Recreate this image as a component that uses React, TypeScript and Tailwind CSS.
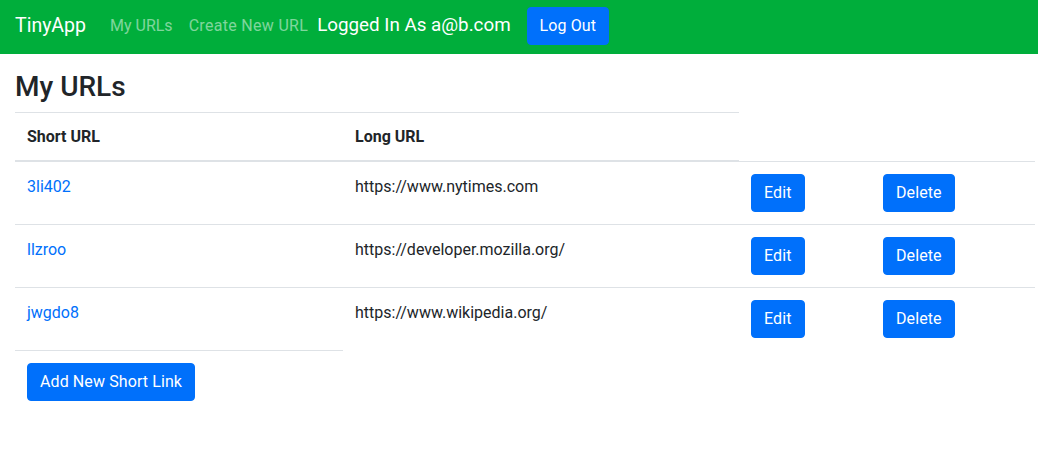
import React from "react";

const rows = [
  { short: "3li402", long: "https://www.nytimes.com" },
  { short: "llzroo", long: "https://developer.mozilla.org/" },
  { short: "jwgdo8", long: "https://www.wikipedia.org/" },
];

const font = { fontFamily: "Roboto, 'Noto Sans', sans-serif" };

function Button({ children }: { children: React.ReactNode }) {
  return (
    <button className="bg-[#0070fb] text-white text-base leading-6 px-3 py-1.5 rounded-[4px] border border-[#0070fb] tracking-[0.1px]">
      {children}
    </button>
  );
}

export default function App() {
  return (
    <div className="min-h-[464px] bg-white text-[#212529]" style={font}>
      <nav className="h-[54px] bg-[#00ae3b] flex items-center px-[15px] pb-[3px]">
        <span className="text-white text-[19.5px] leading-[30px] mr-4">TinyApp</span>
        <a className="text-white/50 text-base px-2">My URLs</a>
        <a className="text-white/50 text-base px-2 tracking-[0.3px]">Create New URL</a>
        <span className="text-white text-[18.8px] ml-px mr-4">Logged In As a@b.com</span>
        <Button>Log Out</Button>
      </nav>

      <div className="px-[15px]">
        <h3 className="text-[28px] leading-[34px] font-medium mt-4 mb-2">My URLs</h3>

        <div className="w-[1020px] text-base leading-6">
          <div className="flex w-[724px] border-t border-b-2 border-[#dee2e6] font-bold">
            <div className="w-[328px] px-3 pt-3 pb-[11px]">Short URL</div>
            <div className="w-[396px] px-3 pt-3 pb-[11px]">Long URL</div>
          </div>
          {rows.map((r, i) => (
            <div key={r.short} className={i === 0 ? "flex border-t border-[#dee2e6] -mt-px" : "flex border-t border-[#dee2e6]"}>
              <div className="w-[328px] px-3 pt-[13px] pb-3">
                <a className="text-[#0070fb]">{r.short}</a>
              </div>
              <div className="w-[396px] px-3 pt-[13px] pb-3">{r.long}</div>
              <div className="w-[132px] p-3">
                <Button>Edit</Button>
              </div>
              <div className="w-[164px] p-3">
                <Button>Delete</Button>
              </div>
            </div>
          ))}
          <div className="w-[328px] border-t border-[#dee2e6] p-3">
            <Button>Add New Short Link</Button>
          </div>
        </div>
      </div>
    </div>
  );
}
